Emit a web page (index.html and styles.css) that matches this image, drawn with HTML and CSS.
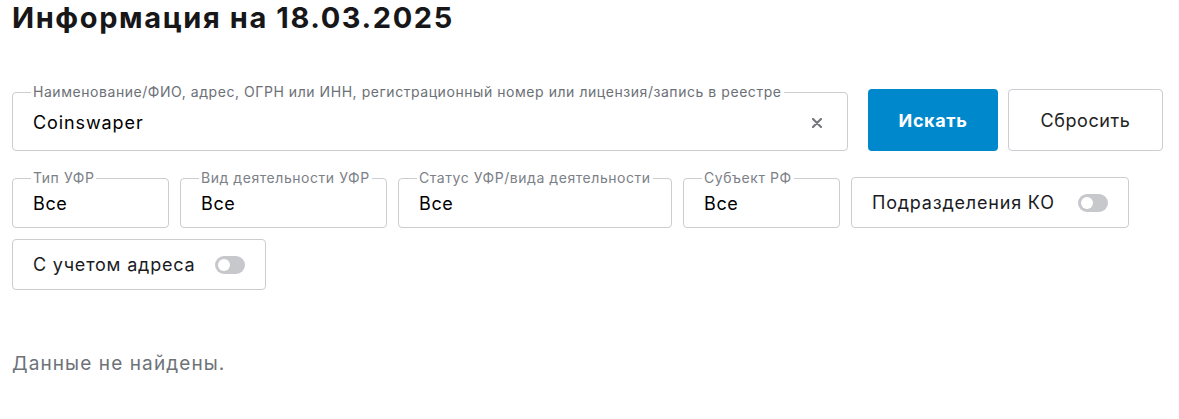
FILE: index.html
```html
<!DOCTYPE html>
<html lang="ru">
<head>
    <meta charset="UTF-8">
    <meta name="viewport" content="width=device-width, initial-scale=1.0">
    <title>Информация на 18.03.2025</title>
    <link rel="stylesheet" href="styles.css">
</head>
<body>

    <main class="page">
        <h1 class="title">Информация на 18.03.2025</h1>

        <form class="search" onsubmit="return false;">
            <div class="search-row">
                <fieldset class="field field-query">
                    <legend>Наименование/ФИО, адрес, ОГРН или ИНН, регистрационный номер или лицензия/запись в реестре</legend>
                    <div class="query-inner">
                        <input type="text" class="query-input" value="Coinswaper">
                        <button type="button" class="clear-btn" aria-label="Очистить">
                            <svg width="10" height="10" viewBox="0 0 10 10">
                                <path d="M1 1 L9 9 M9 1 L1 9" stroke="#75787d" stroke-width="2.2" stroke-linecap="round"/>
                            </svg>
                        </button>
                    </div>
                </fieldset>
                <button type="submit" class="btn btn-primary">Искать</button>
                <button type="reset" class="btn btn-secondary">Сбросить</button>
            </div>

            <div class="filters">
                <fieldset class="field field-select w-type">
                    <legend>Тип УФР</legend>
                    <div class="select-value">Все</div>
                </fieldset>
                <fieldset class="field field-select w-kind">
                    <legend>Вид деятельности УФР</legend>
                    <div class="select-value">Все</div>
                </fieldset>
                <fieldset class="field field-select w-status">
                    <legend>Статус УФР/вида деятельности</legend>
                    <div class="select-value">Все</div>
                </fieldset>
                <fieldset class="field field-select w-region">
                    <legend>Субъект РФ</legend>
                    <div class="select-value">Все</div>
                </fieldset>
                <label class="toggle-box toggle-ko">
                    <span>Подразделения КО</span>
                    <span class="toggle"><span class="knob"></span></span>
                </label>
                <label class="toggle-box">
                    <span>С учетом адреса</span>
                    <span class="toggle"><span class="knob"></span></span>
                </label>
            </div>
        </form>

        <p class="empty">Данные не найдены.</p>
    </main>

</body>
</html>
```

FILE: styles.css
```css
* {
    margin: 0;
    padding: 0;
    box-sizing: border-box;
}

body {
    font-family: 'Inter', 'Roboto', sans-serif;
    background-color: #fff;
    color: #1b1b1f;
}

.page {
    padding: 0 12px;
}

.title {
    font-size: 29px;
    line-height: 36px;
    font-weight: 700;
    letter-spacing: 1.6px;
    color: #17171a;
}

/* Search row */
.search-row {
    display: flex;
    align-items: flex-end;
    margin-top: 48px;
}

.field {
    border: 1px solid #cbcdd1;
    border-radius: 4px;
    padding: 0 20px;
    min-width: 0;
}

.field legend {
    font-size: 14px;
    line-height: 16px;
    letter-spacing: 0.55px;
    color: #6c7077;
    padding: 0 2px;
    margin-left: -2px;
    white-space: nowrap;
}

.field-select legend {
    color: #7c8087;
}

.field-query {
    width: 836px;
    margin-right: 20px;
}

.query-inner {
    display: flex;
    align-items: center;
    height: 45px;
    margin-bottom: 5px;
}

.query-input {
    flex: 1;
    border: none;
    outline: none;
    font-family: inherit;
    font-size: 18px;
    letter-spacing: 0.9px;
    color: #000;
    background: transparent;
}

.clear-btn {
    border: none;
    background: none;
    width: 10px;
    height: 10px;
    display: flex;
    margin-right: 5px;
    cursor: pointer;
}

.btn {
    height: 62px;
    border-radius: 4px;
    font-family: inherit;
    font-size: 18px;
    letter-spacing: 0.6px;
    cursor: pointer;
}

.btn-primary {
    width: 130px;
    background-color: #0088cc;
    border: none;
    color: #fff;
    font-weight: 700;
    margin-right: 10px;
}

.btn-secondary {
    width: 155px;
    background-color: #fff;
    border: 1px solid #cbcdd1;
    color: #222;
}

/* Filters */
.filters {
    display: flex;
    flex-wrap: wrap;
    align-items: flex-end;
    column-gap: 11px;
    row-gap: 11px;
    margin-top: 19px;
}

.select-value {
    height: 35px;
    margin-bottom: 6px;
    display: flex;
    align-items: center;
    font-size: 18px;
    letter-spacing: 0.6px;
    color: #000;
}

.w-type { width: 157px; }
.w-kind { width: 207px; }
.w-status { width: 274px; }
.w-region { width: 157px; }

.toggle-box {
    display: flex;
    align-items: center;
    gap: 20px;
    height: 51px;
    padding: 0 20px;
    border: 1px solid #cbcdd1;
    border-radius: 4px;
    font-size: 18px;
    letter-spacing: 0.8px;
    color: #1b1b1f;
    cursor: pointer;
}

.toggle-ko {
    gap: 23px;
}

.toggle {
    width: 30px;
    height: 18px;
    border-radius: 9px;
    background-color: #c6c8cc;
    padding: 3px;
    display: flex;
}

.knob {
    width: 12px;
    height: 12px;
    border-radius: 50%;
    background-color: #fff;
}

.empty {
    margin-top: 62px;
    font-size: 19px;
    line-height: 24px;
    letter-spacing: 1.1px;
    color: #6e7279;
}
```
